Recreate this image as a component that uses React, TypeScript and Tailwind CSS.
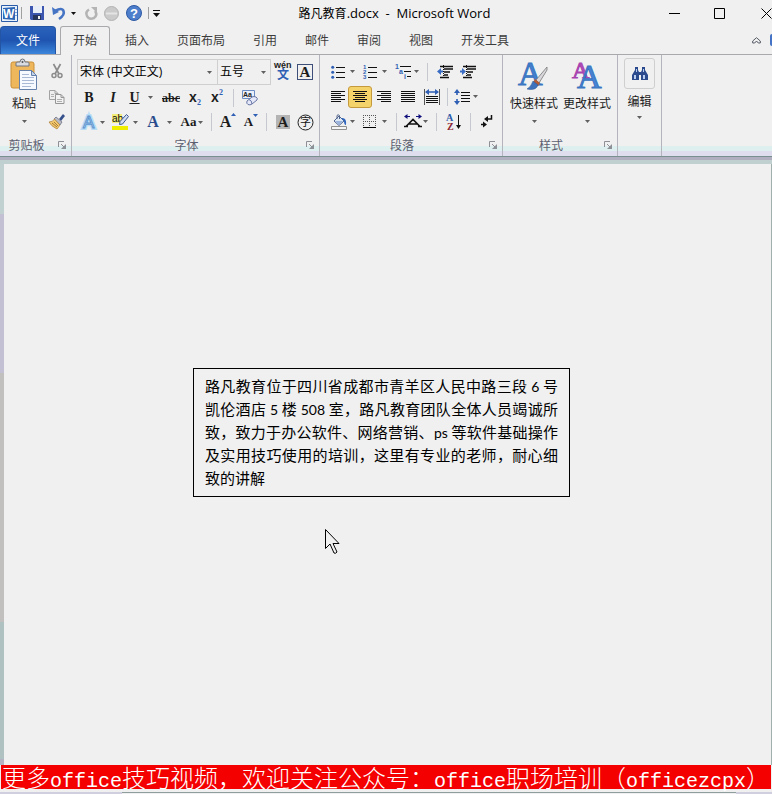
import { FC, ReactNode } from "react";

interface ToolProps {
    label: string;
    className?: string;
    children: ReactNode;
}

interface GroupProps {
    title: string;
    className?: string;
    launcher?: boolean;
    children: ReactNode;
}

const Caret: FC = () => (
    <svg className="shrink-0" width="5" height="3" viewBox="0 0 5 3" aria-hidden="true">
        <path d="M0 0h5L2.500 3z" fill="#606060" />
    </svg>
);

const Divider: FC<{ className: string }> = ({ className }) => (
    <span className={`h-[18px] w-px shrink-0 bg-[#c6c8d0] ${className}`} />
);

const Tool: FC<ToolProps> = ({ label, className = "w-6", children }) => (
    <button
        type="button"
        aria-label={label}
        title={label}
        className={`flex h-[22px] shrink-0 items-center justify-center ${className}`}
    >
        {children}
    </button>
);

const Group: FC<GroupProps> = ({ title, className = "", launcher = true, children }) => (
    <section
        aria-label={title}
        className={`flex shrink-0 flex-col border-r border-[#b4b4bc] ${className}`}
    >
        <div className="flex flex-1 pt-1">{children}</div>
        <div className="flex h-[21px] items-center pr-1 text-[#5c5f70]">
            <span className="flex-1 text-center">{title}</span>
            {launcher && (
                <button type="button" aria-label={`${title}选项`} className="flex w-[14px] justify-end">
                    <svg width="9" height="9" viewBox="0 0 9 9" aria-hidden="true">
                        <path d="M.5 6V.5H6M3 3l3 3" stroke="#8e9098" fill="none" />
                        <path d="M8 3v5H3z" fill="#8e9098" />
                    </svg>
                </button>
            )}
        </div>
    </section>
);

const Lines: FC<{ rows: [number, number][] }> = ({ rows }) => (
    <svg width="14" height="14" viewBox="0 0 14 14" aria-hidden="true">
        {rows.map(([from, to], i) => (
            <path key={i} d={`M${from} ${i * 2 + 1.5}H${to}`} stroke="#111" />
        ))}
    </svg>
);

const BulletIcon: FC = () => (
    <svg width="14" height="14" viewBox="0 0 14 14" aria-hidden="true">
        <path d="M5 2.500h9M5 7.500h9M5 12.500h9" stroke="#111" />
        <g fill="#2f5fb4">
            <circle cx="1.700" cy="2.200" r="1.500" />
            <circle cx="1.700" cy="7.200" r="1.500" />
            <circle cx="1.700" cy="12.200" r="1.500" />
        </g>
    </svg>
);

const NumberIcon: FC = () => (
    <svg width="14" height="14" viewBox="0 0 14 14" aria-hidden="true">
        <path d="M5 2.500h9M5 7.500h9M5 12.500h9" stroke="#111" />
        <g fill="#2f5fb4" fontSize="6" fontWeight="bold" fontFamily="Liberation Sans">
            <text x="0" y="4">1</text>
            <text x="0" y="9">2</text>
            <text x="0" y="14">3</text>
        </g>
    </svg>
);

const MultiLevelIcon: FC = () => (
    <svg width="18" height="16" viewBox="0 0 18 16" aria-hidden="true">
        <path d="M5 2.500h11M9 7.500h7M12 12.500h4" stroke="#111" />
        <g fill="#2f5fb4" fontSize="7" fontWeight="bold" fontFamily="Liberation Sans">
            <text x="0" y="5">1</text>
            <text x="4" y="10">a</text>
            <text x="9" y="15">i</text>
        </g>
    </svg>
);

const IndentIcon: FC<{ inward?: boolean }> = ({ inward = false }) => (
    <svg width="16" height="14" viewBox="0 0 16 14" aria-hidden="true">
        <path d="M3 1.500h13M7 4h9M7 7h6M7 10h4M3 12.500h9" stroke="#111" strokeWidth="1.600" />
        <path d="M6.500 0v14" stroke="#111" strokeDasharray="1 1" />
        <path d={inward ? "M6 6.500L2 3v2.500H0v2h2V10z" : "M0 6.500L4 3v2.500h2v2H4V10z"} fill="#3a6cc4" />
    </svg>
);

const DistributeIcon: FC = () => (
    <svg width="16" height="16" viewBox="0 0 16 16" aria-hidden="true">
        <path d="M.5 0v16M15.500 0v16" stroke="#555" />
        <path d="M2 7.500h12M2 9.500h12M2 11.500h12M2 13.500h12" stroke="#111" />
        <path d="M2 3h12" stroke="#2f5fb4" strokeWidth="1.500" />
        <path d="M1 3l4-3v6zM15 3l-4-3v6z" fill="#2f5fb4" />
    </svg>
);

const SpacingIcon: FC = () => (
    <svg width="16" height="16" viewBox="0 0 16 16" aria-hidden="true">
        <path d="M7 3.500h9M7 6.500h9M7 9.500h9M7 12.500h9" stroke="#111" />
        <path d="M3 2v4M3 10v4" stroke="#2f5fb4" strokeWidth="1.600" />
        <path d="M3 0l3 4H0zM3 16l3-4H0z" fill="#2f5fb4" />
    </svg>
);

const BucketIcon: FC = () => (
    <svg width="16" height="16" viewBox="0 0 16 16" aria-hidden="true">
        <path d="M8 2l5 5-5 4.500-5-4.500z" fill="#dfe8f5" stroke="#52658c" />
        <path d="M4 7h8l-4 4z" fill="#9bb4dd" />
        <path d="M6 5V1.500Q7 0 8.500 1.500V5" stroke="#52658c" fill="none" />
        <path d="M10 4q6-1 5 7-2 0-2-4z" fill="#2f65bd" />
        <path d="M.5 12.500h15v3H.5z" fill="#f5f5f5" stroke="#909090" />
    </svg>
);

const BorderIcon: FC = () => (
    <svg width="14" height="14" viewBox="0 0 14 14" aria-hidden="true">
        <path d="M.5 0v12M6.500 0v12M12.500 0v12M0 .5h13M0 6.500h13" stroke="#555" strokeDasharray="1 1" />
        <path d="M0 12.500h13" stroke="#000" />
    </svg>
);

const CharScaleIcon: FC = () => (
    <svg width="18" height="14" viewBox="0 0 18 14" aria-hidden="true">
        <path d="M2 11.500l7-7 7 7M5 9h8M0 11.500h4M14 11.500h4" stroke="#111" strokeWidth="1.600" fill="none" />
        <path d="M1 1.500h5M12 1.500h5" stroke="#10107c" />
        <path d="M0 1.500L3.500-1v5zM18 1.500L14.500-1v5z" fill="#10107c" />
    </svg>
);

const SortIcon: FC = () => (
    <svg width="16" height="16" viewBox="0 0 16 16" aria-hidden="true">
        <g fontFamily="Liberation Serif" fontSize="10" fontWeight="bold">
            <text x="0" y="7" fill="#2c5aa8">A</text>
            <text x="1" y="16" fill="#8c2432">Z</text>
        </g>
        <path d="M12.500 1v12" stroke="#111" />
        <path d="M10 11h5l-2.500 4z" fill="#111" />
    </svg>
);

const MarksIcon: FC = () => (
    <svg width="12" height="13" viewBox="0 0 12 13" aria-hidden="true">
        <path d="M10.500 0v4H5M0 9.500h4" stroke="#111" strokeWidth="1.500" fill="none" />
        <path d="M3 4l4-3v6zM6 9.500l-4-3v6z" fill="#111" />
    </svg>
);

const HighlightIcon: FC = () => (
    <svg width="18" height="18" viewBox="0 0 18 18" aria-hidden="true">
        <path d="M0 1h10v9H0z" fill="#f2ec78" />
        <path d="M0 13h16v4H0z" fill="#f0ee00" />
        <text x="0" y="9" fontSize="10" fontWeight="normal" fontFamily="Liberation Sans" fill="#111">ab</text>
        <path d="M14.500 1.500l2 2-6 7.500-3 .5.5-3z" fill="#cfdcf2" stroke="#3d588c" />
    </svg>
);

const EraserIcon: FC = () => (
    <svg width="18" height="18" viewBox="0 0 18 18" aria-hidden="true">
        <path d="M1.500 1.500h12v8h-12z" fill="#eaf0fa" stroke="#6c8cc4" />
        <text x="2" y="8" fontSize="7" fontWeight="bold" fontFamily="Liberation Sans" fill="#222">Aa</text>
        <path d="M6 12l5-4q2-1 4 0t1 3l-5 4q-2 1.500-4 .5T6 12z" fill="#e4e8f8" stroke="#6876a4" />
        <path d="M8 10.500q3 1 3 4.500" stroke="#6876a4" fill="none" />
    </svg>
);

const PasteIcon: FC = () => (
    <svg width="28" height="32" viewBox="0 0 28 32" aria-hidden="true">
        <rect x="1" y="3" width="23" height="26" rx="2" fill="#efb75c" stroke="#c98f38" />
        <path d="M6 7V4q0-1 2-1h2q0-3 2.500-3T15 3h2q2 0 2 1v3z" fill="#d8dbe0" stroke="#70757e" />
        <circle cx="12.500" cy="3" r="1" fill="#555" />
        <path d="M9.500 11.500h12l5 5v14h-17z" fill="#f6f9ff" stroke="#6680ac" />
        <path d="M21.500 11.500v5h5z" fill="#c4d3ea" stroke="#6680ac" />
        <path d="M12 15.500h7M12 18.500h12M12 21.500h12M12 24.500h12M12 27.500h9" stroke="#a9b8d4" />
    </svg>
);

const CutIcon: FC = () => (
    <svg width="12" height="15" viewBox="0 0 12 15" fill="none" aria-hidden="true">
        <path d="M2.500 0l5.500 10M9.500 0L4 10" stroke="#8c8c8c" strokeWidth="1.700" />
        <circle cx="3" cy="11.500" r="2" stroke="#8c8c8c" strokeWidth="1.500" />
        <circle cx="9" cy="11.500" r="2" stroke="#8c8c8c" strokeWidth="1.500" />
    </svg>
);

const CopyIcon: FC = () => (
    <svg width="16" height="14" viewBox="0 0 16 14" aria-hidden="true">
        <path d="M.5.5H6l3 3v6H.5zM6 .5v3h3" fill="#eee" stroke="#a2a2a2" />
        <path d="M6.500 4.500H12l3 3v6H6.500zM12 4.500v3h3" fill="#f2f2f2" stroke="#969696" />
        <path d="M2 4.500h3M2 6.500h3M8 9.500h5M8 11.500h5" stroke="#b0b0b0" />
    </svg>
);

const PainterIcon: FC = () => (
    <svg width="16" height="15" viewBox="0 0 16 15" aria-hidden="true">
        <path d="M10 5l4-5 2 2-4 5z" fill="#36508c" />
        <path d="M7 3l6 5-2 3-6-6z" fill="#b8bcc8" stroke="#667" strokeWidth=".7" />
        <path d="M5.500 5l5.500 6-3 4Q2 12 0 8q4 0 5.500-3z" fill="#f4ca70" stroke="#a87a30" strokeWidth=".7" />
        <path d="M3 9l5 4M5 8l4 4" stroke="#8a5c20" strokeWidth=".7" />
    </svg>
);

const BrushShape: FC = () => (
    <g>
        <path d="M29 8L18 21l3 3 8-13z" fill="#d8d8dc" stroke="#777" strokeWidth=".8" />
        <path d="M17 20l5 4-2 3-5-3z" fill="#b65c34" />
        <path d="M15 22l5 4q-2 6-11 4 4-2 6-8z" fill="#3e72bd" stroke="#29538e" strokeWidth=".5" />
    </g>
);

const QuickStyleIcon: FC = () => (
    <svg width="32" height="32" viewBox="0 0 32 32" aria-hidden="true">
        <text x="0" y="26" fontSize="34" fontFamily="Liberation Serif" fill="#4380cf" stroke="#3a74c0">A</text>
        <BrushShape />
    </svg>
);

const ChangeStyleIcon: FC = () => (
    <svg width="32" height="32" viewBox="0 0 32 32" aria-hidden="true">
        <text x="1" y="19" fontSize="24" fontFamily="Liberation Serif" fill="#b04cb8" stroke="#a844b0">A</text>
        <text x="6" y="29" fontSize="34" fontFamily="Liberation Serif" fill="#4684d6" stroke="#3a74c0">A</text>
    </svg>
);

const FindIcon: FC = () => (
    <svg width="16" height="14" viewBox="0 0 16 14" aria-hidden="true">
        <path d="M3 0h3v3l1 2v8H0V8l3-5zM10 0h3v3l3 5v5H9V5l1-2z" fill="#2b4a8e" />
        <path d="M6 5h4v3H6z" fill="#2b4a8e" />
        <path d="M2 8h2v4H2zM11 8h2v4h-2zM4 2h1v3H4zM11 2h1v3h-1z" fill="#b9cdf0" />
    </svg>
);

const QuickAccess: FC = () => (
    <div className="flex w-40 shrink-0 items-center pl-px">
        <svg width="17" height="17" viewBox="0 0 17 17" aria-label="Word" role="img">
            <path d="M.5.5h16v16H.5z" fill="#e9f1fb" stroke="#2b5ca8" />
            <path d="M14 4.500h2M14 7.500h2M14 10.500h2" stroke="#7ea4d8" />
            <path d="M2 3l12-1v13L2 14z" fill="#2c66b4" />
            <text x="2" y="13" fontSize="12" fontWeight="bold" fontFamily="Liberation Sans" fill="#fff">W</text>
        </svg>
        <span className="mr-2 ml-[3px] h-3 w-px bg-[#a0a0a0]" />
        <button type="button" aria-label="保存" className="w-[22px]">
            <svg width="14" height="14" viewBox="0 0 14 14">
                <path d="M0 0h14v14H1l-1-1z" fill="#3c56b0" />
                <path d="M3 0h9v7H3z" fill="#e8eef8" />
                <path d="M3 9h8v5H3z" fill="#27345c" />
                <path d="M8 10h2v3H8z" fill="#eee" />
            </svg>
        </button>
        <button type="button" aria-label="撤消" className="flex w-[33px] items-center gap-[5px]">
            <svg width="14" height="14" viewBox="0 0 14 14" fill="none">
                <path d="M3 5q7-4 8.500 0T7 13" stroke="#4674c4" strokeWidth="2.600" />
                <path d="M0 1l1 8 6-3z" fill="#4674c4" />
            </svg>
            <svg width="5" height="3" viewBox="0 0 5 3">
                <path d="M0 0h5L2.500 3z" fill="#111" />
            </svg>
        </button>
        <button type="button" aria-label="重复" className="w-5">
            <svg width="13" height="13" viewBox="0 0 13 13" fill="none">
                <path d="M4 2.500Q0 5 2 9t7 2q4-3 1-7" stroke="#b4b4b4" strokeWidth="2.500" />
                <path d="M6 0h6v6z" fill="#b4b4b4" />
            </svg>
        </button>
        <button type="button" aria-label="状态" className="w-[22px]">
            <svg width="15" height="15" viewBox="0 0 15 15">
                <circle cx="7.500" cy="7.500" r="7" fill="#cacaca" stroke="#b2b2b2" />
                <path d="M2 7.500h11" stroke="#e4e4e4" strokeWidth="2" />
            </svg>
        </button>
        <button type="button" aria-label="帮助" className="w-[22px]">
            <svg width="16" height="16" viewBox="0 0 16 16">
                <circle cx="8" cy="8" r="7.500" fill="#4c7ecb" stroke="#2f5aa5" />
                <text x="4" y="13" fontSize="13" fontWeight="bold" fontFamily="Liberation Sans" fill="#fff">?</text>
            </svg>
        </button>
        <span className="mr-1 h-3 w-px shrink-0 bg-[#a0a0a0]" />
        <button type="button" aria-label="自定义快速访问工具栏" className="shrink-0">
            <svg width="7" height="7" viewBox="0 0 7 7">
                <path d="M0 .5h7" stroke="#111" />
                <path d="M0 3h7L3.500 7z" fill="#111" />
            </svg>
        </button>
    </div>
);

const TitleBar: FC = () => (
    <header className="flex h-[26px] shrink-0">
        <QuickAccess />
        <h1 className="flex-1 pr-[23px] text-center leading-[26px] whitespace-pre text-black">
            路凡教育<span className="text-[13px]">.docx  -  Microsoft Word</span>
        </h1>
        <div className="flex w-[120px] shrink-0 overflow-hidden">
            <button type="button" aria-label="最小化" className="flex w-[45px] shrink-0 items-center justify-center">
                <svg width="11" height="11" viewBox="0 0 11 11">
                    <path d="M0 5.500h11" stroke="#000" />
                </svg>
            </button>
            <button type="button" aria-label="最大化" className="flex w-[45px] shrink-0 items-center justify-center">
                <svg width="11" height="11" viewBox="0 0 11 11">
                    <path d="M.5.5h10v10H.5z" stroke="#000" fill="none" />
                </svg>
            </button>
            <button type="button" aria-label="关闭" className="flex w-12 shrink-0 items-center justify-center">
                <svg width="11" height="11" viewBox="0 0 11 11">
                    <path d="M.5.5l10 10M10.500.5l-10 10" stroke="#000" />
                </svg>
            </button>
        </div>
    </header>
);

const tabs = ["插入", "页面布局", "引用", "邮件", "审阅", "视图", "开发工具"];

const TabBar: FC = () => (
    <nav className="flex h-[29px] shrink-0 text-[#3c3c3c]">
        <div className="flex border-b border-[#a9a9ad]">
            <button
                type="button"
                className="w-14 rounded-t-sm border border-b-0 border-[#2455a4] bg-linear-to-b from-[#2a62bc] via-[#1f55b0] to-[#3c86dc] text-white"
            >
                文件
            </button>
            <span className="w-1" />
        </div>
        <button
            type="button"
            className="w-[50px] rounded-t-[3px] border border-b-0 border-[#a9a9ad]"
        >
            开始
        </button>
        <div className="flex flex-1 items-center overflow-hidden border-b border-[#a9a9ad]">
            {tabs.map((tab, i) => (
                <button
                    key={tab}
                    type="button"
                    className={`h-full shrink-0 pt-0.5 pr-[14px] ${i ? "pl-[14px]" : "pl-[15px]"}`}
                >
                    {tab}
                </button>
            ))}
            <button type="button" aria-label="功能区最小化" className="ml-auto w-[18px] shrink-0">
                <svg width="9" height="7" viewBox="0 0 9 7" fill="none">
                    <path d="M4.500.7L.7 4v2h2l1.800-2 1.800 2h2V4z" stroke="#555b66" />
                </svg>
            </button>
            <button type="button" aria-label="帮助" className="h-3 w-0.5 shrink-0 rounded-l-full bg-[#4472c4]" />
        </div>
    </nav>
);

const FontGroup: FC = () => (
    <Group title="字体" className="w-[248px]">
        <div className="flex flex-col pl-[5px] text-[#1c1c1c]">
            <div className="flex h-[26px] items-center">
                <label className="relative flex h-[26px] w-[141px] shrink-0 items-center border border-[#cfcfcf]">
                    <span className="sr-only">字体</span>
                    <select className="h-6 w-full appearance-none pl-0.5 leading-6 text-black">
                        <option>宋体 (中文正文)</option>
                    </select>
                    <span className="pointer-events-none absolute right-[5px]">
                        <Caret />
                    </span>
                </label>
                <label className="relative -ml-px flex h-[26px] w-[54px] shrink-0 items-center border border-[#cfcfcf]">
                    <span className="sr-only">字号</span>
                    <select className="h-6 w-full appearance-none pl-0.5 leading-6 text-black">
                        <option>五号</option>
                    </select>
                    <span className="pointer-events-none absolute right-1">
                        <Caret />
                    </span>
                </label>
                <Tool label="拼音指南">
                    <svg width="18" height="18" viewBox="0 0 18 18">
                        <text x="0" y="5" fontSize="9" fontWeight="bold" fontFamily="Liberation Sans" fill="#222">wén</text>
                        <text x="3" y="16" fontSize="12" fontWeight="bold" fontFamily="Noto Sans CJK SC" fill="#2f5fb4">文</text>
                    </svg>
                </Tool>
                <Tool label="字符边框" className="w-5">
                    <span className="flex size-4 items-center justify-center border border-[#3d4f78] font-['Liberation_Serif',serif] text-[15px] leading-none font-bold">
                        A
                    </span>
                </Tool>
            </div>
            <div className="flex h-[25px] items-center font-['Liberation_Serif',serif] text-[14px] font-bold">
                <Tool label="加粗">B</Tool>
                <Tool label="倾斜">
                    <span className="italic">I</span>
                </Tool>
                <Tool label="下划线" className="w-8 gap-2">
                    <span className="underline">U</span>
                    <Caret />
                </Tool>
                <Tool label="删除线" className="w-7">
                    <span className="text-[12px] line-through">abc</span>
                </Tool>
                <Tool label="下标" className="w-5">
                    <span className="font-['Liberation_Sans',sans-serif]">x</span>
                    <span className="self-end text-[8px] text-[#2f5fb4]">2</span>
                </Tool>
                <Tool label="上标">
                    <span className="font-['Liberation_Sans',sans-serif]">x</span>
                    <span className="self-start text-[8px] text-[#2f5fb4]">2</span>
                </Tool>
                <Divider className="mx-1" />
                <Tool label="清除格式">
                    <EraserIcon />
                </Tool>
            </div>
            <div className="flex h-6 items-center font-['Liberation_Serif',serif] font-bold">
                <Tool label="文本效果" className="w-[31px] gap-[3px]">
                    <svg width="16" height="18" viewBox="0 0 16 18" fontWeight="normal">
                        <text x="2" y="15" fontSize="17" fontFamily="Liberation Sans" fill="#f4faff" stroke="#b9dcf6" strokeWidth="4">A</text>
                        <text x="2" y="15" fontSize="17" fontFamily="Liberation Sans" fill="#f4faff" stroke="#5b94cf">A</text>
                    </svg>
                    <Caret />
                </Tool>
                <Tool label="突出显示" className="w-[34px] gap-[3px]">
                    <HighlightIcon />
                    <Caret />
                </Tool>
                <Tool label="字体颜色" className="w-[35px] gap-2">
                    <span className="text-[16px] text-[#2b4c8c]">A</span>
                    <Caret />
                </Tool>
                <Tool label="更改大小写" className="w-[30px] gap-0.5">
                    <span className="text-[13px]">Aa</span>
                    <Caret />
                </Tool>
                <Divider className="mx-1" />
                <Tool label="增大字体">
                    <span className="text-[16px]">A</span>
                    <svg className="self-start" width="5" height="7" viewBox="0 0 5 7">
                        <path d="M0 5h5L2.500 2z" fill="#2f5fb4" />
                    </svg>
                </Tool>
                <Tool label="缩小字体" className="w-[22px]">
                    <span className="text-[13px]">A</span>
                    <svg className="self-start" width="5" height="7" viewBox="0 0 5 7">
                        <path d="M0 3h5L2.500 6z" fill="#2f5fb4" />
                    </svg>
                </Tool>
                <Divider className="mx-1" />
                <Tool label="字符底纹">
                    <span className="flex size-[14px] items-center justify-center bg-[#b4b4b4] text-[15px] leading-none">A</span>
                </Tool>
                <Tool label="带圈字符" className="w-5">
                    <svg width="17" height="17" viewBox="0 0 17 17">
                        <circle cx="8.500" cy="8.500" r="7.500" fill="none" stroke="#222" />
                        <text x="3" y="12" fontSize="11" fontWeight="normal" fontFamily="Noto Sans CJK SC" fill="#111">字</text>
                    </svg>
                </Tool>
            </div>
        </div>
    </Group>
);

const ParagraphGroup: FC = () => (
    <Group title="段落" className="w-[183px]">
        <div className="flex flex-col pl-2">
            <div className="flex h-[25px] items-center">
                <Tool label="项目符号" className="w-[30px] gap-[5px]">
                    <BulletIcon />
                    <Caret />
                </Tool>
                <Tool label="编号" className="w-[34px] gap-[5px]">
                    <NumberIcon />
                    <Caret />
                </Tool>
                <Tool label="多级列表" className="w-[30px] gap-px">
                    <MultiLevelIcon />
                    <Caret />
                </Tool>
                <Divider className="mx-[5px]" />
                <Tool label="减少缩进量">
                    <IndentIcon />
                </Tool>
                <Tool label="增加缩进量" className="w-[22px]">
                    <IndentIcon inward />
                </Tool>
            </div>
            <div className="flex h-[25px] items-center">
                <Tool label="左对齐" className="w-5">
                    <Lines rows={[[0, 14], [0, 10], [0, 14], [0, 10], [0, 14], [0, 10]]} />
                </Tool>
                <Tool label="居中" className="w-6 rounded-[3px] border border-[#c49a3c] bg-[#f5d36b]">
                    <Lines rows={[[0, 14], [2, 12], [0, 14], [2, 12], [0, 14], [2, 12]]} />
                </Tool>
                <Tool label="右对齐">
                    <Lines rows={[[0, 14], [4, 14], [0, 14], [4, 14], [0, 14], [4, 14]]} />
                </Tool>
                <Tool label="两端对齐">
                    <Lines rows={[[0, 14], [0, 14], [0, 14], [0, 14], [0, 14], [0, 14]]} />
                </Tool>
                <Tool label="分散对齐">
                    <DistributeIcon />
                </Tool>
                <Divider className="mx-[3px]" />
                <Tool label="行距" className="w-[30px] gap-[3px]">
                    <SpacingIcon />
                    <Caret />
                </Tool>
            </div>
            <div className="flex h-[25px] items-center">
                <Tool label="底纹" className="w-[30px] gap-[3px]">
                    <BucketIcon />
                    <Caret />
                </Tool>
                <Tool label="边框" className="w-[34px] gap-[5px]">
                    <BorderIcon />
                    <Caret />
                </Tool>
                <Divider className="mx-1" />
                <Tool label="中文版式" className="w-[30px] gap-px">
                    <CharScaleIcon />
                    <Caret />
                </Tool>
                <Divider className="mx-[5px]" />
                <Tool label="排序">
                    <SortIcon />
                </Tool>
                <Divider className="mx-1" />
                <Tool label="编辑标记">
                    <MarksIcon />
                </Tool>
            </div>
        </div>
    </Group>
);

const Ribbon: FC = () => (
    <div className="flex h-[101px] shrink-0 bg-[linear-gradient(to_top,#dedeee_5px,#deefef_5px,#deefef_10px,#f0f0f0_10px)]">
        <Group title="剪贴板" className="w-[72px]">
            <button type="button" className="flex w-12 flex-col items-center text-[#1c1c1c]">
                <PasteIcon />
                <span className="pt-1 leading-[18px]">粘贴</span>
                <span className="flex h-4 items-center">
                    <Caret />
                </span>
            </button>
            <div className="flex flex-col">
                <Tool label="剪切" className="h-[25px] w-[18px]">
                    <CutIcon />
                </Tool>
                <Tool label="复制" className="h-[25px] w-[18px]">
                    <CopyIcon />
                </Tool>
                <Tool label="格式刷" className="h-[25px] w-[18px]">
                    <PainterIcon />
                </Tool>
            </div>
        </Group>
        <FontGroup />
        <ParagraphGroup />
        <Group title="样式" className="w-[115px]">
            <div className="flex pl-[5px] text-[#1c1c1c]">
                <button type="button" className="flex w-[52px] flex-col items-center">
                    <QuickStyleIcon />
                    <span className="pt-1 leading-[18px]">快速样式</span>
                    <span className="flex h-4 items-center">
                        <Caret />
                    </span>
                </button>
                <button type="button" className="flex w-[54px] flex-col items-center">
                    <ChangeStyleIcon />
                    <span className="pt-1 leading-[18px]">更改样式</span>
                    <span className="flex h-4 items-center">
                        <Caret />
                    </span>
                </button>
            </div>
        </Group>
        <section className="flex w-11 shrink-0 justify-center border-r border-[#b4b4bc]">
            <button type="button" className="flex flex-col items-center pt-[3px] text-[#1c1c1c]">
                <span className="flex size-[31px] items-center justify-center rounded-[3px] border border-[#cfcfcf]">
                    <FindIcon />
                </span>
                <span className="pt-1 leading-[18px]">编辑</span>
                <span className="flex h-3 items-center">
                    <Caret />
                </span>
            </button>
        </section>
    </div>
);

const paragraph = [
    ["路凡教育位于四川省成都市青羊区人民中路三段 ", "6", " 号"],
    ["凯伦酒店 ", "5", " 楼 ", "508", " 室，路凡教育团队全体人员竭诚所"],
    ["致，致力于办公软件、网络营销、", "ps", " 等软件基础操作"],
    ["及实用技巧使用的培训，这里有专业的老师，耐心细"],
];

const Document: FC = () => (
    <main className="relative flex flex-1">
        <div className="flex w-1 shrink-0 flex-col">
            <span className="h-[50px] bg-[#c1d0d0]" />
            <span className="h-[159px] bg-[#c2c0d2]" />
            <span className="h-[249px] bg-[#c1c0bf]" />
            <span className="h-[137px] bg-[#b0c1c1]" />
            <span className="flex-1 bg-[#b5b4c5]" />
        </div>
        <div className="flex-1 border-r border-[#a0b0ad] pt-[204px] pl-[189px]">
            <div className="w-[377px] border border-black px-[11px] pt-[5px] pb-[7px] font-['Noto_Sans_CJK_SC',sans-serif] text-[15px] leading-[23px] text-black">
                {paragraph.map((line, row) => (
                    <p key={row} className="[text-align-last:justify] whitespace-nowrap">
                        {line.map((part, i) =>
                            i % 2 ? (
                                <span key={i} className="font-['Lato',sans-serif] text-[14px] leading-none">
                                    {part}
                                </span>
                            ) : (
                                part
                            )
                        )}
                    </p>
                ))}
                <p>致的讲解</p>
            </div>
        </div>
        {/* mouse pointer resting on the page */}
        <svg className="absolute top-[365px] left-[325px]" width="15" height="26" viewBox="0 0 15 26" aria-hidden="true">
            <path d="M.5.5v19l4.500-4.500 4 9q1.500 1 3-1l-4-8.500h6z" fill="#f0f0f0" stroke="#000" />
        </svg>
    </main>
);

export default function App() {
    return (
        <div className="flex min-h-screen flex-col overflow-hidden bg-[#f0f0f0] font-['Open_Sans','Noto_Sans_CJK_SC',sans-serif] text-[12px] [&_svg]:overflow-visible">
            <TitleBar />
            <TabBar />
            <Ribbon />
            <div className="h-1 shrink-0 border-t border-[#78908f] bg-[#b0afbf]" />
            <div className="h-1 shrink-0 bg-[#c0d0d0]" />
            <Document />
            <footer>
                <p className="mx-px h-6 bg-[#f40000] pl-px font-['Noto_Sans_CJK_SC',sans-serif] text-[24px] leading-6 font-light whitespace-nowrap text-white">
                    更多<span className="font-['Liberation_Mono',monospace] text-[20px] leading-none">office</span>
                    技巧视频，欢迎关注公众号：
                    <span className="font-['Liberation_Mono',monospace] text-[20px] leading-none">office</span>
                    职场培训（
                    <span className="font-['Liberation_Mono',monospace] text-[20px] leading-none">officezcpx</span>）
                </p>
                <div className="flex h-[5px] items-end">
                    <span className="h-0.5 w-[122px] bg-[#d0cfe0]" />
                    <span className="h-0.5 flex-1 border-t border-[#8e9e9c]" />
                    <span className="h-0.5 w-9 bg-[#d0cfe0]" />
                </div>
            </footer>
        </div>
    );
}
